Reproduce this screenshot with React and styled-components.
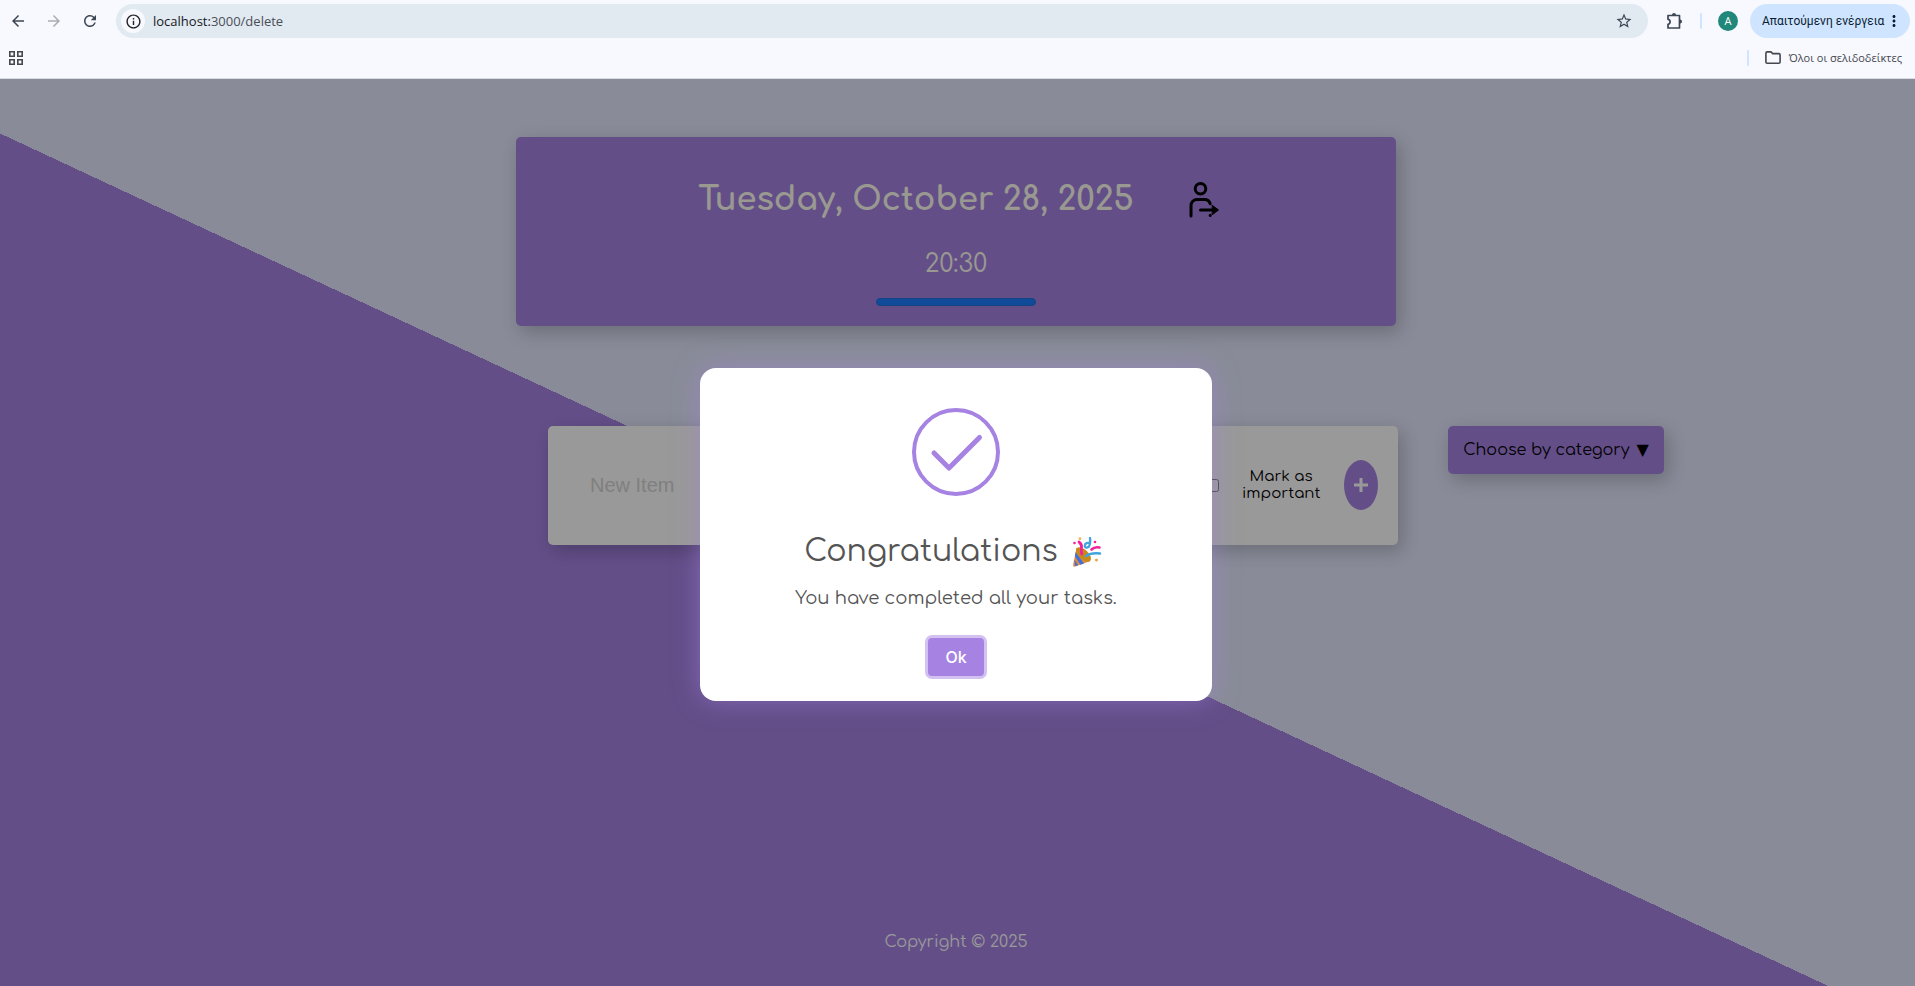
import React from "react";
import styled, { createGlobalStyle } from "styled-components";
import { MdArrowBack, MdArrowForward, MdRefresh, MdInfoOutline, MdStarBorder, MdMoreVert } from "react-icons/md";

const purple = "#a683e3";
const rounded = `"Comfortaa", "Inter", sans-serif`;
const chromeFont = `"Segoe UI", "Open Sans", sans-serif`;

const GlobalStyle = createGlobalStyle`
  *, *::before, *::after { box-sizing: border-box; }
  body { margin: 0; font-family: ${rounded}; }
  button, input { font: inherit; }
  h1, h2, p { margin: 0; }
`;

const Page = styled.div`
  display: flex;
  flex-direction: column;
  min-height: 100vh;
`;

/* Browser bar */

const BrowserBar = styled.header`
  padding: 4px 5px 0 0;
  background: #f8f9ff;
  border-bottom: 1px solid #d9dce3;
  font-family: ${chromeFont};
  color: #3c4654;
`;

const Toolbar = styled.div`
  display: flex;
  align-items: center;
  height: 34px;
`;

const ToolButton = styled.button`
  display: grid;
  place-items: center;
  width: 36px;
  height: 34px;
  padding: 0;
  border: 0;
  background: none;
  color: ${(p) => (p.$faded ? "#a9acb3" : "#3c4654")};
`;

const AddressBar = styled.div`
  flex: 1;
  display: flex;
  align-items: center;
  height: 34px;
  margin: 0 9px 0 8px;
  padding: 0 6px 0 5px;
  border-radius: 17px;
  background: #e1e9f1;
`;

const SiteInfo = styled.button`
  display: grid;
  place-items: center;
  width: 24px;
  height: 24px;
  padding: 0;
  border: 0;
  border-radius: 50%;
  background: #f8f9ff;
  color: #1f2328;
`;

const Url = styled.span`
  flex: 1;
  padding-left: 8px;
  font-size: 13px;
  line-height: 20px;
  color: #4a4f57;

  b { font-weight: 400; color: #15181c; }
`;

const Divider = styled.span`
  width: 2px;
  height: 16px;
  border-radius: 1px;
  background: #cfe4ff;
`;

const ToolbarDivider = styled(Divider)`
  margin-left: 7px;
`;

const Avatar = styled.button`
  width: 20px;
  height: 20px;
  margin: 0 12px 0 16px;
  padding: 0;
  border: 0;
  border-radius: 50%;
  background: #20877a;
  color: #fff;
  font-size: 11px;
  line-height: 20px;
`;

const ActionPill = styled.button`
  display: flex;
  align-items: center;
  justify-content: space-between;
  width: 160px;
  height: 34px;
  padding: 0 7px 0 12px;
  border: 0;
  border-radius: 17px;
  background: #cfe5ff;
  color: #0b1d33;
  font-family: "Roboto", sans-serif;
  font-size: 12px;
  line-height: 16px;
  white-space: nowrap;
`;

const Bookmarks = styled.nav`
  display: flex;
  align-items: center;
  justify-content: space-between;
  height: 40px;
  padding: 0 8px;
`;

const AppsButton = styled(ToolButton)`
  width: 16px;
  height: 16px;
`;

const AllBookmarks = styled.div`
  display: flex;
  align-items: center;
  gap: 16px;
`;

const BookmarksLink = styled.a`
  display: flex;
  align-items: center;
  gap: 8px;
  font-size: 11px;
  line-height: 16px;
  color: #44474e;
  text-decoration: none;
`;

/* To-do page */

const Main = styled.main`
  position: relative;
  flex: 1;
  display: flex;
  flex-direction: column;
  padding: 58px 3px 34px 0;
  background: linear-gradient(25deg, ${purple} calc(50% - 43px), #e4e9fd calc(50% - 43px));
`;

const shadow = "4px 6px 18px rgba(0, 0, 0, 0.22)";

const DateCard = styled.section`
  display: flex;
  flex-direction: column;
  align-items: center;
  width: min(880px, 92%);
  margin: 0 auto 100px;
  padding: 43px 16px 20px;
  border-radius: 5px;
  background: ${purple};
  box-shadow: ${shadow};
  color: #fffff2;
`;

const DateRow = styled.div`
  display: flex;
  align-items: center;
  gap: 50px;
  padding-left: 10px;
`;

const DateTitle = styled.h1`
  font-size: 32px;
  line-height: 40px;
  font-weight: 700;
`;

const LogoutButton = styled.button`
  display: grid;
  place-items: center;
  width: 40px;
  height: 40px;
  padding: 0;
  border: 0;
  background: none;
  color: #000;
`;

const Clock = styled.p`
  margin: 28px 0 18px;
  font-size: 25px;
  line-height: 32px;
  font-weight: 400;
`;

const Meter = styled.div`
  width: 160px;
  height: 8px;
  border: 1px solid #2470d8;
  border-radius: 5px;
  background: #1c7dff;
`;

const Board = styled.div`
  display: grid;
  grid-template-columns: 1fr minmax(0, 850px) 1fr;
  align-items: start;
  padding-left: 34px;
`;

const ItemForm = styled.form`
  grid-column: 2;
  display: flex;
  align-items: center;
  height: 119px;
  padding: 0 20px 1px 42px;
  border-radius: 5px;
  background: #fff;
  box-shadow: ${shadow};
`;

const ItemInput = styled.input`
  flex: 1;
  min-width: 0;
  padding: 0;
  border: 0;
  background: none;
  font-family: "Liberation Sans", Arial, sans-serif;
  font-size: 20px;
  line-height: 24px;

  &::placeholder { color: #d5d5d5; opacity: 1; }
`;

const ImportantBox = styled.input`
  width: 13px;
  height: 13px;
  margin: 0 23px 0 0;
`;

const ImportantLabel = styled.label`
  width: 78px;
  margin-right: 24px;
  font-size: 15px;
  line-height: 17px;
  text-align: center;
`;

const AddButton = styled.button`
  display: grid;
  place-items: center;
  width: 34px;
  height: 50px;
  padding: 0;
  border: 0;
  border-radius: 50%;
  background: ${purple};
  color: #fff;
`;

const CategoryButton = styled.button`
  display: flex;
  align-items: center;
  justify-content: center;
  gap: 7px;
  justify-self: start;
  width: 216px;
  height: 48px;
  margin-left: 50px;
  padding: 0;
  border: 0;
  border-radius: 5px;
  background: ${purple};
  box-shadow: ${shadow};
  color: #000;
  font-size: 16px;
  line-height: 24px;
  white-space: nowrap;
`;

const Caret = styled.span`
  font-family: "DejaVu Sans", sans-serif;
`;

const Footer = styled.footer`
  margin-top: auto;
  padding-top: 40px;
  color: #fff;
  font-size: 16px;
  line-height: 20px;
  text-align: center;
`;

/* Dialog */

const Overlay = styled.div`
  position: absolute;
  inset: 0;
  display: grid;
  place-items: center;
  padding: 3px 3px 0 0;
  background: rgba(0, 0, 0, 0.4);
`;

const Dialog = styled.section`
  display: flex;
  flex-direction: column;
  align-items: center;
  width: min(512px, 92%);
  padding: 40px 20px 25px;
  border-radius: 16px;
  background: #fff;
  box-shadow: 0 0 26px rgba(166, 131, 227, 0.5);
  color: #545454;
`;

const DialogTitle = styled.h2`
  display: flex;
  align-items: center;
  gap: 14px;
  margin: 36px 0 14px;
  padding-right: 6px;
  font-size: 30px;
  line-height: 40px;
  font-weight: 400;
`;

const DialogText = styled.p`
  font-size: 18px;
  line-height: 24px;
  font-weight: 400;
`;

const OkButton = styled.button`
  width: 56px;
  height: 38px;
  margin-top: 28px;
  padding: 0;
  border: 0;
  border-radius: 4px;
  background: ${purple};
  box-shadow: 0 0 0 3px #d2c1f1;
  color: #fff;
  font-family: "Inter", sans-serif;
  font-size: 16px;
  line-height: 20px;
  font-weight: 500;
`;

const PuzzleIcon = () => (
  <svg width="18" height="18" viewBox="0 0 18 18" fill="none" stroke="currentColor" strokeWidth="1.7" strokeLinejoin="round">
    <path d="M2 3.5h11.5v12.500H2v-3.700c2.800-.3 2.800-4.700 0-5z" />
    <path d="M6 3a2 2 0 0 1 4 0zM14 7.500a2 2 0 0 1 0 4z" fill="currentColor" stroke="none" />
  </svg>
);

const AppsIcon = () => (
  <svg width="14" height="14" viewBox="0 0 14 14" fill="none" stroke="#44474e" strokeWidth="1.6">
    <path d="M.8.8h4.400v4.400H.8zM8.800.8h4.400v4.400H8.800zM.8 8.800h4.400v4.400H.8zM8.800 8.800h4.400v4.400H8.800z" />
  </svg>
);

const FolderIcon = () => (
  <svg width="16" height="14" viewBox="0 0 16 14" fill="none" stroke="currentColor" strokeWidth="1.6" strokeLinejoin="round">
    <path d="M.9 2.200q0-1.300 1.300-1.300H6l1.700 1.700h6.100q1.300 0 1.300 1.300v7.100q0 1.300-1.300 1.300H2.200q-1.300 0-1.300-1.300z" />
  </svg>
);

const LogoutIcon = () => (
  <svg width="40" height="40" viewBox="0 0 40 40" fill="none" stroke="currentColor" strokeWidth="3" strokeLinecap="round" strokeLinejoin="round">
    <circle cx="16.500" cy="8.700" r="5.300" />
    <path d="M7 36V25.500a6 6 0 0 1 6-6h7.500a6 6 0 0 1 5.700 4.200M16.500 30H32" />
    <path d="M28.500 25.500 34.500 30l-6 4.500z" fill="currentColor" strokeWidth="1" />
    <path d="M26.200 35.300v.2" />
  </svg>
);

const SuccessIcon = () => (
  <svg width="88" height="88" viewBox="0 0 88 88" fill="none" stroke={purple} aria-hidden="true">
    <circle cx="44" cy="44" r="42" strokeWidth="4" />
    <path d="M22 45 37 60 67.500 29.500" strokeWidth="5" strokeLinecap="round" strokeLinejoin="round" />
  </svg>
);

const PartyIcon = () => (
  <svg width="30" height="30" viewBox="0 0 30 30" fill="none" strokeLinecap="round" role="img" aria-label="Party popper">
    <path d="M4.500 11 1 28.500q.2 1.500 2 1L18.500 24Z" fill="#e08a3c" />
    <path d="M3.700 15 12 26.600l-3.500 1.200-5.600-8.500zM2.200 22.500l4 5.800-3 1z" fill="#3f6fe0" />
    <ellipse cx="11.500" cy="17.500" rx="9.300" ry="4.800" transform="rotate(43 11.500 17.500)" fill="#c98a1c" />
    <path d="M7 5q3 2 2.500 6t.3 6" stroke="#f0219a" strokeWidth="2.800" />
    <path d="M18 1q.8 5-1 8.500-3 2.500-4.300-.5.300-3.500 4.300-3" stroke="#3fa4e0" strokeWidth="2.300" />
    <path d="M19.500 12.500q3-3 8-2" stroke="#f0219a" strokeWidth="2.600" />
    <path d="M14 19q5-3.500 14-2.500" stroke="#3fa4e0" strokeWidth="2.600" />
    <circle cx="8" cy="1.700" r="1.400" fill="#f3b64d" />
    <circle cx="24.500" cy="23" r="1.500" fill="#f0a04d" />
    <circle cx="2.500" cy="6" r="1.300" fill="#f0219a" />
    <circle cx="23" cy="5" r="1.300" fill="#f0219a" />
  </svg>
);

export default function App() {
  return (
    <Page>
      <GlobalStyle />
      <BrowserBar>
        <Toolbar>
          <ToolButton aria-label="Back"><MdArrowBack size={18} /></ToolButton>
          <ToolButton aria-label="Forward" $faded><MdArrowForward size={18} /></ToolButton>
          <ToolButton aria-label="Reload"><MdRefresh size={18} /></ToolButton>
          <AddressBar>
            <SiteInfo aria-label="Site information"><MdInfoOutline size={17} /></SiteInfo>
            <Url><b>localhost:</b>3000/delete</Url>
            <ToolButton aria-label="Bookmark"><MdStarBorder size={18} /></ToolButton>
          </AddressBar>
          <ToolButton aria-label="Extensions"><PuzzleIcon /></ToolButton>
          <ToolbarDivider />
          <Avatar>A</Avatar>
          <ActionPill>Απαιτούμενη ενέργεια<MdMoreVert size={18} /></ActionPill>
        </Toolbar>
        <Bookmarks>
          <AppsButton aria-label="Apps"><AppsIcon /></AppsButton>
          <AllBookmarks>
            <Divider />
            <BookmarksLink href="#bookmarks"><FolderIcon />Όλοι οι σελιδοδείκτες</BookmarksLink>
          </AllBookmarks>
        </Bookmarks>
      </BrowserBar>

      <Main>
        <DateCard>
          <DateRow>
            <DateTitle>Tuesday, October 28, 2025</DateTitle>
            <LogoutButton aria-label="Log out"><LogoutIcon /></LogoutButton>
          </DateRow>
          <Clock>20:30</Clock>
          <Meter />
        </DateCard>

        <Board>
          <ItemForm onSubmit={(e) => e.preventDefault()}>
            <ItemInput type="text" placeholder="New Item" aria-label="New Item" />
            <ImportantBox type="checkbox" id="important" />
            <ImportantLabel htmlFor="important">Mark as important</ImportantLabel>
            <AddButton type="submit" aria-label="Add">
              <svg width="16" height="16" viewBox="0 0 16 16" stroke="currentColor" strokeWidth="3">
                <path d="M8 1v14M1 8h14" />
              </svg>
            </AddButton>
          </ItemForm>
          <CategoryButton>Choose by category <Caret>▼</Caret></CategoryButton>
        </Board>

        <Footer>Copyright © 2025</Footer>

        <Overlay>
          <Dialog role="dialog" aria-modal="true" aria-labelledby="dialog-title">
            <SuccessIcon />
            <DialogTitle id="dialog-title">Congratulations <PartyIcon /></DialogTitle>
            <DialogText>You have completed all your tasks.</DialogText>
            <OkButton>Ok</OkButton>
          </Dialog>
        </Overlay>
      </Main>
    </Page>
  );
}
